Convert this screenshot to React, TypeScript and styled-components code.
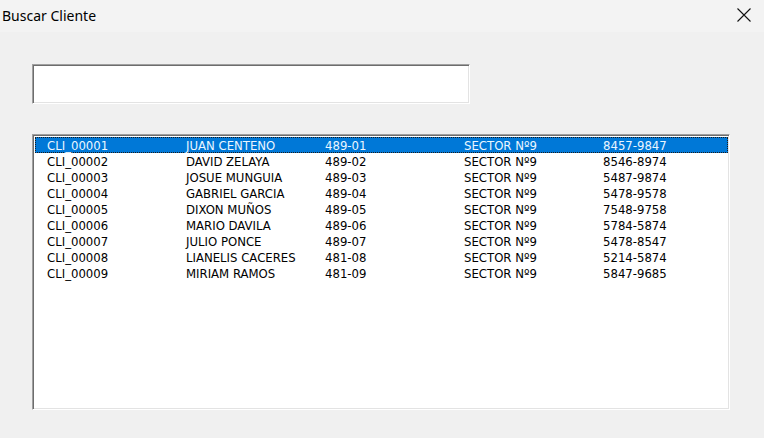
import React from "react";
import styled, { createGlobalStyle } from "styled-components";

const Global = createGlobalStyle`
  html, body { margin: 0; padding: 0; background: #f0f0f0; }
  #root { width: 764px; height: 438px; overflow: hidden; }
`;

const Window = styled.div`
  width: 764px;
  height: 438px;
  background: #f0f0f0;
  display: flex;
  flex-direction: column;
`;

const TitleBar = styled.div`
  height: 32px;
  flex: none;
  background: #f3f3f3;
  display: flex;
  align-items: center;
  justify-content: space-between;
  padding: 0 13px 0 2px;
  box-sizing: border-box;
`;

const Title = styled.span`
  font-family: "Noto Sans", "Open Sans", sans-serif;
  font-size: 14px;
  color: #000;
  margin-top: -2px;
`;

const CloseButton = styled.div`
  width: 14px;
  height: 14px;
  display: flex;
  margin-top: -2px;
`;

const Body = styled.div`
  display: flex;
  flex-direction: column;
  padding: 32px 0 0 32px;
`;

const Sunken = styled.div`
  box-sizing: border-box;
  background: #fff;
  border: 1px solid;
  border-color: #a0a0a0 #ffffff #ffffff #a0a0a0;
  box-shadow: inset 1px 1px 0 #6d6d6d, inset -1px -1px 0 #e3e3e3;
`;

const SearchBox = styled(Sunken)`
  width: 438px;
  height: 40px;
`;

const ListBox = styled(Sunken)`
  width: 698px;
  height: 276px;
  margin-top: 30px;
  padding: 2px 1px 2px 2px;
  display: flex;
  flex-direction: column;
`;

const Row = styled.div<{ $selected?: boolean }>`
  display: grid;
  grid-template-columns: repeat(5, 139px);
  height: 16px;
  box-sizing: border-box;
  padding-left: 11px;
  padding-top: 1px;
  align-items: center;
  border: 1px dotted ${(p) => (p.$selected ? "#1c1c1c" : "transparent")};
  background: ${(p) => (p.$selected ? "#0078d7" : "transparent")};
  color: ${(p) => (p.$selected ? "#eaf6ff" : "#000")};
  font-family: "DejaVu Sans", "Liberation Sans", sans-serif;
  font-stretch: condensed;
  font-size: 13px;
  line-height: 14px;
  white-space: nowrap;
`;

const Cell = styled.span``;

const clients = [
  ["CLI_00001", "JUAN CENTENO", "489-01", "SECTOR Nº9", "8457-9847"],
  ["CLI_00002", "DAVID ZELAYA", "489-02", "SECTOR Nº9", "8546-8974"],
  ["CLI_00003", "JOSUE MUNGUIA", "489-03", "SECTOR Nº9", "5487-9874"],
  ["CLI_00004", "GABRIEL GARCIA", "489-04", "SECTOR Nº9", "5478-9578"],
  ["CLI_00005", "DIXON MUÑOS", "489-05", "SECTOR Nº9", "7548-9758"],
  ["CLI_00006", "MARIO DAVILA", "489-06", "SECTOR Nº9", "5784-5874"],
  ["CLI_00007", "JULIO PONCE", "489-07", "SECTOR Nº9", "5478-8547"],
  ["CLI_00008", "LIANELIS CACERES", "481-08", "SECTOR Nº9", "5214-5874"],
  ["CLI_00009", "MIRIAM RAMOS", "481-09", "SECTOR Nº9", "5847-9685"],
];

export default function App() {
  return (
    <Window>
      <Global />
      <TitleBar>
        <Title>Buscar Cliente</Title>
        <CloseButton>
          <svg width="14" height="14" viewBox="0 0 14 14">
            <path d="M0.5 0.5 L13.5 13.5 M13.5 0.5 L0.5 13.5" stroke="#111" strokeWidth="1.1" fill="none" />
          </svg>
        </CloseButton>
      </TitleBar>
      <Body>
        <SearchBox />
        <ListBox>
          {clients.map((c, i) => (
            <Row key={c[0]} $selected={i === 0}>
              {c.map((v, j) => (
                <Cell key={j}>{v}</Cell>
              ))}
            </Row>
          ))}
        </ListBox>
      </Body>
    </Window>
  );
}
